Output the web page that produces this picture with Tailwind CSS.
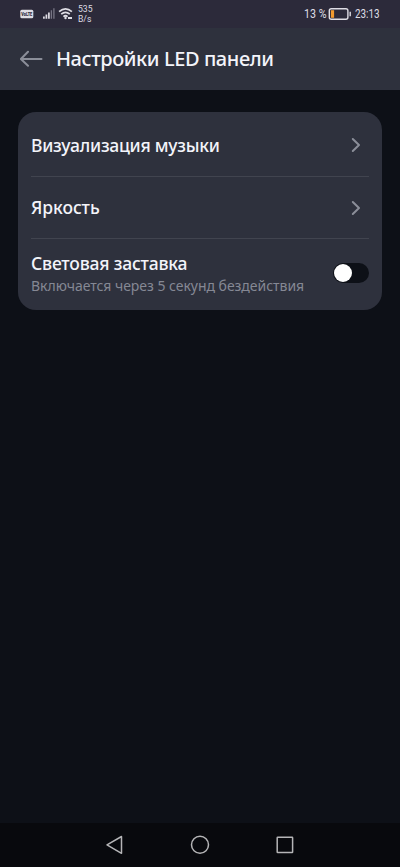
<!DOCTYPE html>
<html lang="ru">
<head>
<meta charset="utf-8">
<title>Настройки LED панели</title>
<script src="https://cdn.jsdelivr.net/npm/@tailwindcss/browser@4"></script>
</head>
<body class="bg-[#0d1017] font-['Noto_Sans',sans-serif] text-[#f3f4fa]">
<div class="flex h-[867px] w-[400px] flex-col overflow-hidden">
  <div class="flex h-7 items-center justify-between bg-[#2c2a3a] pr-[19px] pl-5 font-[Roboto,sans-serif] text-[#dedde4]">
    <div class="flex items-center">
      <svg class="h-7 w-[58px]" viewBox="20 0 58 28" fill="none">
        <rect x="20.3" y="9.7" width="13" height="8.6" rx="1.5" fill="#dedde4"/>
        <text x="21.3" y="16" font-family="Roboto" font-size="5.3" font-weight="900" textLength="11" lengthAdjust="spacingAndGlyphs" fill="#2c2a3a">VoLTE</text>
        <path d="M43.9 16.6v2.2M46.4 14.6v4.2M48.9 12.4v6.4" stroke="#dedde4" stroke-width="1.7"/>
        <path d="M51.4 10.2v8.6M53.9 8.2v10.6" stroke="#777584" stroke-width="1.3"/>
        <path d="M59.1 11.7q6.4-5.6 12.8 0M61.2 14.2q4.3-3.7 8.6 0M63.4 16.6q2.1-1.7 4.2 0" stroke="#dedde4" stroke-width="1.7"/>
        <circle cx="65.5" cy="18" r="1.2" fill="#dedde4"/>
        <path d="M68 18h4" stroke="#dedde4" stroke-width="2"/>
      </svg>
      <div class="text-[8.6px] leading-[10px]"><div>535</div><div>B/s</div></div>
    </div>
    <div class="flex items-center text-[13px]">
      <span class="w-[24px] origin-left scale-x-[.82] whitespace-nowrap">13 %</span>
      <svg class="h-7 w-[26px]" viewBox="328 0 26 28" fill="none">
        <rect x="329.3" y="8.7" width="18.6" height="10.6" rx="2" stroke="#dedde4" stroke-width="1.4"/>
        <path d="M350.2 11.8v4.4" stroke="#dedde4" stroke-width="1.4"/>
        <rect x="330.9" y="10.2" width="3.2" height="7.6" fill="#f29a2e"/>
      </svg>
      <span class="w-[27px] origin-left translate-x-px scale-x-[.76]">23:13</span>
    </div>
  </div>
  <header class="flex h-[62px] items-center bg-[#2e313d] pl-5">
    <svg class="h-6 w-9" viewBox="0 0 36 24" fill="none" stroke="#8b8e99" stroke-width="2" stroke-linecap="round" stroke-linejoin="round"><path d="M8 4.8 .9 12 8 18.8M1 12h20.5"/></svg>
    <h1 class="text-[20px] font-medium tracking-[-0.42px] whitespace-nowrap">Настройки LED панели</h1>
  </header>
  <main class="flex-1 px-[18px] pt-[22px]">
    <div class="h-[198px] rounded-[18px] bg-[#2e313d] px-[13px]">
      <div class="flex h-[65px] items-center justify-between border-b border-[#41444f] pt-[2px]">
        <span class="text-[17.5px] font-medium tracking-[-0.26px] whitespace-nowrap">Визуализация музыки</span>
        <svg class="mr-2 h-4 w-[10px]" viewBox="0 0 10 16" fill="none" stroke="#8b8e99" stroke-width="2" stroke-linecap="round" stroke-linejoin="round"><path d="m1.8 2 6.2 6-6.2 6"/></svg>
      </div>
      <div class="flex h-[62px] items-center justify-between border-b border-[#41444f]">
        <span class="text-[17.5px] font-medium tracking-[-0.05px] whitespace-nowrap">Яркость</span>
        <svg class="mr-2 h-4 w-[10px]" viewBox="0 0 10 16" fill="none" stroke="#8b8e99" stroke-width="2" stroke-linecap="round" stroke-linejoin="round"><path d="m1.8 2 6.2 6-6.2 6"/></svg>
      </div>
      <div class="flex h-[71px] items-center justify-between pb-[3px]">
        <div class="pt-[2px] whitespace-nowrap">
          <div class="text-[17.5px] leading-[23px] font-medium tracking-[-0.18px]">Световая заставка</div>
          <div class="text-[14px] leading-[21px] tracking-[-0.03px] text-[#858894]">Включается через 5 секунд бездействия</div>
        </div>
        <div class="flex h-5 w-9 items-center rounded-full bg-[#0d1017] pl-px"><div class="size-[18px] rounded-full bg-white"></div></div>
      </div>
    </div>
  </main>
  <nav class="h-11 bg-[#08090d]">
    <svg class="h-11 w-[400px]" viewBox="0 823 400 44" fill="none" stroke="#b5b5b7" stroke-width="1.5" stroke-linejoin="round">
      <path d="M107 844.8 121.5 836.5V853.3Z"/>
      <circle cx="200" cy="844.8" r="8.5"/>
      <rect x="277.2" y="837.2" width="15.4" height="15.2" rx=".5"/>
    </svg>
  </nav>
</div>
</body>
</html>
